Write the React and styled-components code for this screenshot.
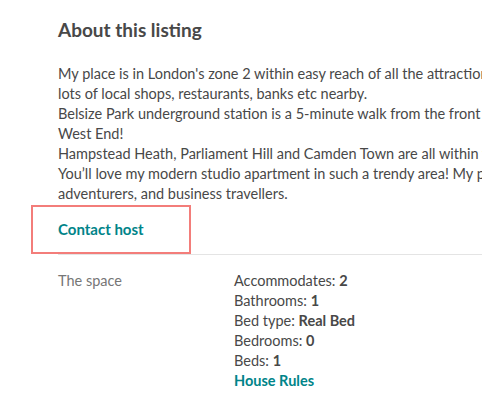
import React from "react";
import styled, { createGlobalStyle } from "styled-components";

const GlobalStyle = createGlobalStyle`
  html, body {
    margin: 0;
    padding: 0;
    background: #ffffff;
    overflow: hidden;
  }
  body {
    font-family: Lato, "Noto Sans", "Liberation Sans", sans-serif;
    color: #484848;
    -webkit-font-smoothing: antialiased;
  }
`;

const Page = styled.div`
  width: 900px;
  padding: 17px 0 0 58px;
  box-sizing: border-box;
`;

const Heading = styled.h2`
  margin: 0;
  font-size: 19px;
  line-height: 26px;
  font-weight: 700;
  color: #484848;
`;

const Description = styled.p`
  margin: 21px 0 0;
  font-size: 14.5px;
  line-height: 20px;
  white-space: pre-line;
`;

const ContactRow = styled.div`
  position: relative;
  padding: 15px 0 15px;
`;

const ContactLink = styled.a`
  font-size: 15px;
  line-height: 20px;
  font-weight: 700;
  color: #008489;
  text-decoration: none;
  cursor: pointer;
`;

const Highlight = styled.span`
  position: absolute;
  left: -27px;
  top: 1px;
  width: 160px;
  height: 49px;
  box-sizing: border-box;
  border: 2px solid #f37d7a;
  pointer-events: none;
`;

const Divider = styled.hr`
  margin: 0;
  border: none;
  border-top: 1px solid #e4e4e4;
`;

const SpaceSection = styled.div`
  display: grid;
  grid-template-columns: 176px 1fr;
  padding-top: 16px;
  font-size: 14.5px;
  line-height: 20px;
`;

const SectionLabel = styled.div`
  color: #767676;
`;

const DetailList = styled.div`
  display: flex;
  flex-direction: column;
`;

const Detail = styled.div`
  color: #484848;
`;

const Value = styled.strong`
  font-weight: 700;
`;

const RulesLink = styled.a`
  font-weight: 700;
  color: #008489;
  text-decoration: none;
  cursor: pointer;
`;

const description = `My place is in London's zone 2 within easy reach of all the attractions of central London, with
lots of local shops, restaurants, banks etc nearby.
Belsize Park underground station is a 5-minute walk from the front door and gets you to the heart of the
West End!
Hampstead Heath, Parliament Hill and Camden Town are all within walking distance.
You\u2019ll love my modern studio apartment in such a trendy area! My place is good for couples, solo
adventurers, and business travellers.`;

const details = [
  ["Accommodates", "2"],
  ["Bathrooms", "1"],
  ["Bed type", "Real Bed"],
  ["Bedrooms", "0"],
  ["Beds", "1"],
];

export default function App() {
  return (
    <>
      <GlobalStyle />
      <Page>
        <Heading>About this listing</Heading>
        <Description>{description}</Description>
        <ContactRow>
          <ContactLink>Contact host</ContactLink>
          <Highlight />
        </ContactRow>
        <Divider />
        <SpaceSection>
          <SectionLabel>The space</SectionLabel>
          <DetailList>
            {details.map(([label, value]) => (
              <Detail key={label}>
                {label}: <Value>{value}</Value>
              </Detail>
            ))}
            <RulesLink>House Rules</RulesLink>
          </DetailList>
        </SpaceSection>
      </Page>
    </>
  );
}
